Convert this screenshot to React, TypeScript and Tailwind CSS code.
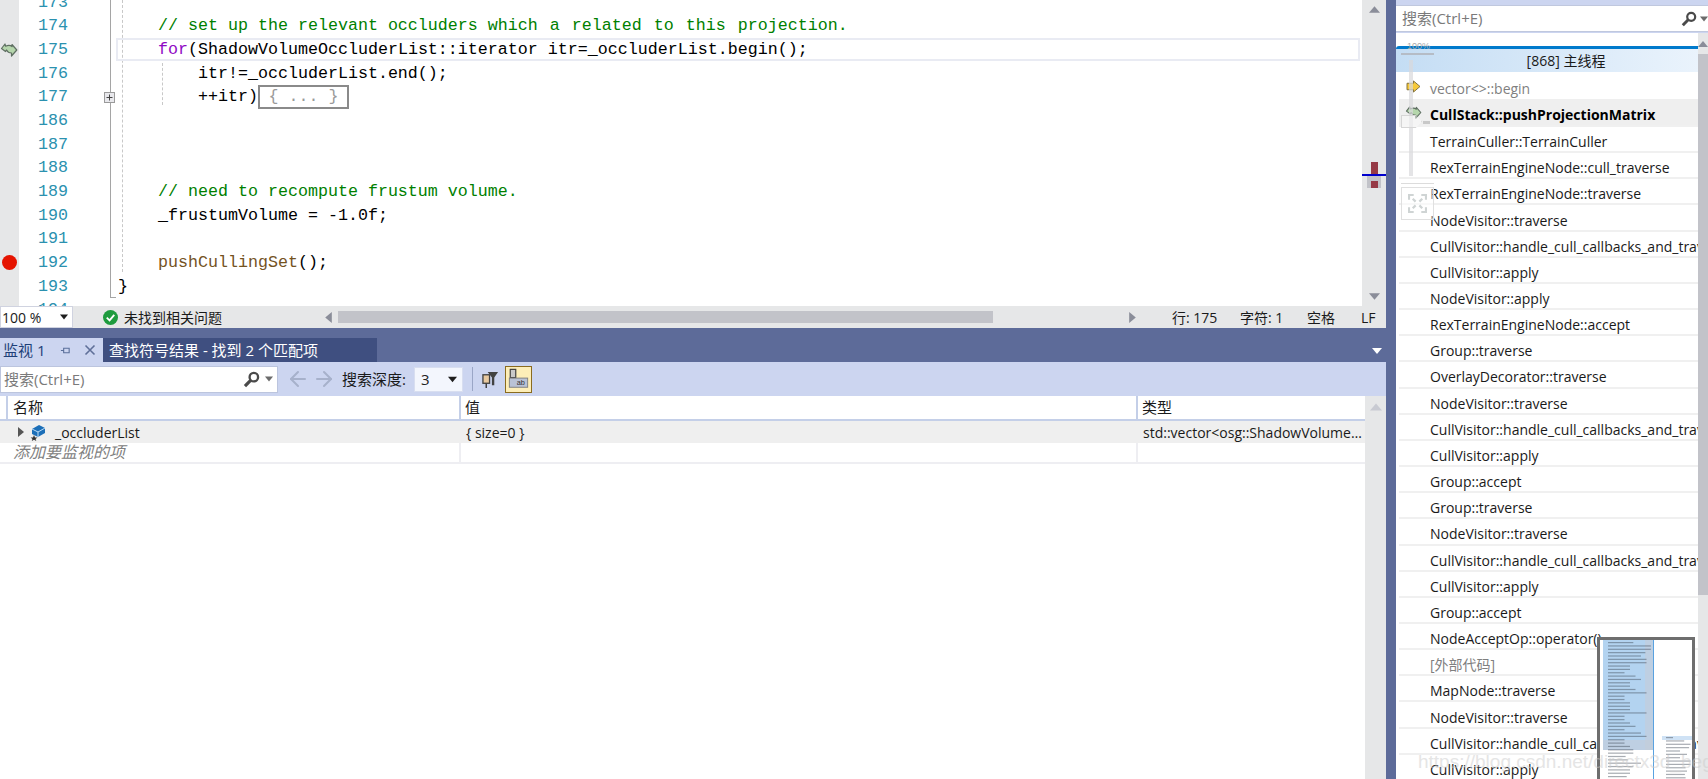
import React from "react";
import { ArrowLeft, ArrowRight } from "lucide-react";

const UI = `font-['Open_Sans','Noto_Sans_CJK_SC',sans-serif]`;

type Seg = [string, string];
const C = "text-[#008000]";
const K = "text-[#8f08c4]";
const lines: { n: number; segs: Seg[]; mark?: "arrow" | "bp"; fold?: boolean; box?: boolean }[] = [
  { n: 173, segs: [] },
  { n: 174, segs: [["    // set up the relevant occluders ", C], ["which a related to this projection.", `${C} [word-spacing:2px]`]] },
  { n: 175, mark: "arrow", segs: [["    ", ""], ["for", K], ["(ShadowVolumeOccluderList::iterator itr=_occluderList.begin();", ""]] },
  { n: 176, segs: [["        itr!=_occluderList.end();", ""]] },
  { n: 177, fold: true, box: true, segs: [["        ++itr)", ""]] },
  { n: 186, segs: [] },
  { n: 187, segs: [] },
  { n: 188, segs: [] },
  { n: 189, segs: [["    // need to recompute frustum volume.", C]] },
  { n: 190, segs: [["    _frustumVolume = -1.0f;", ""]] },
  { n: 191, segs: [] },
  { n: 192, mark: "bp", segs: [["    ", ""], ["pushCullingSet", "text-[#74531f]"], ["();", ""]] },
  { n: 193, segs: [["}", ""]] },
  { n: 194, segs: [] },
];

const H = "CullVisitor::handle_cull_callbacks_and_traverse";
const frames: { t: string; gray?: boolean; bold?: boolean }[] = [
  { t: "vector<>::begin", gray: true },
  { t: "CullStack::pushProjectionMatrix", bold: true },
  { t: "TerrainCuller::TerrainCuller" },
  { t: "RexTerrainEngineNode::cull_traverse" },
  { t: "RexTerrainEngineNode::traverse" },
  { t: "NodeVisitor::traverse" },
  { t: H },
  { t: "CullVisitor::apply" },
  { t: "NodeVisitor::apply" },
  { t: "RexTerrainEngineNode::accept" },
  { t: "Group::traverse" },
  { t: "OverlayDecorator::traverse" },
  { t: "NodeVisitor::traverse" },
  { t: H },
  { t: "CullVisitor::apply" },
  { t: "Group::accept" },
  { t: "Group::traverse" },
  { t: "NodeVisitor::traverse" },
  { t: H },
  { t: "CullVisitor::apply" },
  { t: "Group::accept" },
  { t: "NodeAcceptOp::operator()" },
  { t: "[外部代码]", gray: true },
  { t: "MapNode::traverse" },
  { t: "NodeVisitor::traverse" },
  { t: H },
  { t: "CullVisitor::apply" },
];

function ReturnArrow({ className }: { className?: string }) {
  return (
    <svg viewBox="0 0 18 16" className={className}>
      <path
        d="M1.5 6.5 L5 2 L5.5 4.2 C8 3 10.5 3.2 12 4.5 L12 2.5 L16.8 8 L11.5 14 L11.5 11 C9 11 7.5 10 6.5 8 L5.5 9.5 Z"
        fill="#b5d6ac"
        stroke="#5f6f62"
        strokeWidth="1.2"
        strokeLinejoin="round"
      />
    </svg>
  );
}

function Lens({ className }: { className?: string }) {
  return (
    <svg viewBox="0 0 16 16" className={className} fill="none" stroke="#4a4a4a">
      <circle cx="10.2" cy="5.8" r="4" strokeWidth="2.2" />
      <path d="M7.2 8.8 L1.8 14.2" strokeWidth="3" />
    </svg>
  );
}

const Tri = ({ d, c, className }: { d: string; c: string; className?: string }) => (
  <svg viewBox="0 0 10 10" className={className}>
    <path d={d} fill={c} />
  </svg>
);
const UP = "M0 8 L5 2 L10 8 Z";
const DOWN = "M0 2 L10 2 L5 8 Z";
const LEFT = "M8 0 L8 10 L2 5 Z";
const RIGHT = "M2 0 L2 10 L8 5 Z";

function EditorRow({ l }: { l: (typeof lines)[number] }) {
  return (
    <div className="flex h-[23.7px] items-center leading-[23.7px]">
      <div className="flex h-full w-[19px] shrink-0 items-center justify-center bg-[#e6e7e8] pr-[1px]">
        {l.mark === "arrow" && <ReturnArrow className="h-[16px] w-[18px]" />}
        {l.mark === "bp" && <div className="h-[15px] w-[15px] rounded-full bg-[#e51400]" />}
      </div>
      <div className="w-[49px] shrink-0 text-right text-[#2b91af]">{l.n}</div>
      <div className="flex w-[50px] shrink-0 items-center pl-[36px]">
        {l.fold && (
          <div className="z-10 flex h-[11px] w-[11px] items-center justify-center border border-[#9a9a9a] bg-[#e8e8ec] text-[11px] leading-none text-[#333]">
            <svg viewBox="0 0 9 9" className="h-[9px] w-[9px]">
              <path d="M1.5 4.5 H7.5 M4.5 1.5 V7.5" stroke="#444" strokeWidth="1" />
            </svg>
          </div>
        )}
      </div>
      <div className="flex items-center whitespace-pre text-black">
        {l.segs.map((s, i) => (
          <span key={i} className={s[1]}>
            {s[0]}
          </span>
        ))}
        {l.box && (
          <span className="flex h-[24px] w-[91px] items-center justify-center border-2 border-[#8a8a8a] text-[#9a9a9a]">
            {"{ ... }"}
          </span>
        )}
      </div>
    </div>
  );
}

function Editor() {
  return (
    <div className="relative flex h-[306px] shrink-0 bg-white">
      <div className="relative min-w-0 flex-1 overflow-hidden font-['Liberation_Mono',monospace] text-[16.67px]">
        <div className="-mt-[9.5px]">
          {lines.map((l) => (
            <EditorRow key={l.n} l={l} />
          ))}
        </div>
        {/* fold margin line */}
        <div className="absolute left-[110px] top-0 h-[298px] w-[1px] bg-[#a5a5a5]" />
        <div className="absolute left-[110px] top-[297px] h-[1px] w-[6px] bg-[#a5a5a5]" />
        {/* indent guides */}
        <div className="absolute left-[122px] top-0 h-[272px] border-l border-dashed border-[#c8c8c8]" />
        <div className="absolute left-[162px] top-[63px] h-[42px] border-l border-dashed border-[#c8c8c8]" />
        {/* current line */}
        <div className="absolute left-[116px] right-[2px] top-[38px] h-[23px] border-2 border-[#e9ebf3]" />
      </div>
      <div className="relative flex w-[24px] shrink-0 flex-col items-center justify-between bg-[#e6e7e8] py-[4px]">
        <Tri d={UP} c="#8a8d99" className="h-[11px] w-[11px]" />
        <Tri d={DOWN} c="#8a8d99" className="h-[11px] w-[11px]" />
        <div className="absolute left-[5px] top-[176px] h-[12px] w-[14px] bg-[#c2c3c9]" />
        <div className="absolute left-[9px] top-[162px] h-[12px] w-[7px] bg-[#963a46]" />
        <div className="absolute left-[9px] top-[181px] h-[7px] w-[7px] bg-[#963a46]" />
        <div className="absolute left-0 top-[174px] h-[2px] w-[24px] bg-[#0000cd]" />
      </div>
    </div>
  );
}

function StatusBar() {
  return (
    <div className={`flex h-[22px] shrink-0 items-center bg-[#e6e7e8] text-[14px] text-[#1a1a1a] ${UI}`}>
      <div className="flex h-full w-[73px] shrink-0 items-center justify-between border border-[#d0d3e0] bg-white pl-[1px] pr-[4px]">
        <span>100 %</span>
        <Tri d={DOWN} c="#1e1e1e" className="h-[8px] w-[8px]" />
      </div>
      <svg viewBox="0 0 16 16" className="ml-[30px] h-[15px] w-[15px] shrink-0">
        <circle cx="8" cy="8" r="8" fill="#1e9b3e" />
        <path d="M4 8.2 L7 11 L12 5.2" stroke="#fff" strokeWidth="2" fill="none" />
      </svg>
      <span className="ml-[6px] w-[199px] shrink-0">未找到相关问题</span>
      <Tri d={LEFT} c="#8a8d99" className="h-[11px] w-[11px] shrink-0" />
      <div className="ml-[4px] h-[12px] w-[655px] shrink-0 bg-[#c2c3c9]" />
      <div className="w-[134px] shrink-0" />
      <Tri d={RIGHT} c="#8a8d99" className="h-[11px] w-[11px] shrink-0" />
      <span className="ml-[34px] w-[68px] shrink-0">行: 175</span>
      <span className="w-[67px] shrink-0">字符: 1</span>
      <span className="w-[54px] shrink-0">空格</span>
      <span>LF</span>
    </div>
  );
}

function VarIcon() {
  return (
    <svg viewBox="0 0 16 18" className="h-[18px] w-[16px] shrink-0">
      <path d="M2 6 L9 2 L15 5 L15 10 L8 14 L2 11 Z" fill="#1c6fb8" />
      <path d="M2 6 L8 9 L15 5 M8 9 V14" stroke="#bcdcf5" strokeWidth="1" fill="none" />
      <path d="M4 12 L5 14.5 L7.5 14.6 L5.6 16 L6.3 18 L4 16.8 L1.8 18 L2.4 16 L0.6 14.6 L3 14.5 Z" fill="#333" />
    </svg>
  );
}

function PinFilter() {
  return (
    <svg viewBox="0 0 18 20" className="h-[19px] w-[17px]">
      <rect x="1" y="5" width="7" height="9" fill="#e8c9a0" stroke="#424242" strokeWidth="1.4" />
      <path d="M4.5 14 V19" stroke="#424242" strokeWidth="1.6" />
      <path d="M6 2 H17 L13 8 V16 H10.5 V8 Z" fill="#424242" />
    </svg>
  );
}

function PinLabel() {
  return (
    <svg viewBox="0 0 22 24" className="h-[22px] w-[21px]">
      <rect x="2" y="1.5" width="6" height="9" fill="#c9c9c9" stroke="#424242" strokeWidth="1.3" />
      <path d="M5 10.5 V18" stroke="#424242" strokeWidth="1.6" />
      <rect x="1" y="11" width="20" height="10" fill="#b9c2d6" stroke="#7d7d7d" strokeWidth="1" />
      <text x="9" y="19" fontSize="8" fill="#333" fontFamily="Liberation Sans">ab</text>
    </svg>
  );
}

function WatchPanel() {
  return (
    <div className={`flex min-h-0 flex-1 flex-col text-[14px] text-[#1a1a1a] ${UI}`}>
      <div className="flex h-[34px] shrink-0 items-end bg-[#5d6b99] pr-[3px] text-[15px]">
        <div className="flex h-[24px] w-[103px] shrink-0 items-center bg-[#ccd5f0] pl-[3px] text-[#1e3f78]">
          <span className="w-[57px]">监视 1</span>
          <svg viewBox="0 0 12 12" className="h-[11px] w-[11px]">
            <path d="M1 6 H4 M4 3 V9 M4 3.5 H10 V8.5 H4" stroke="#5a6f9a" fill="none" strokeWidth="1.2" />
          </svg>
          <svg viewBox="0 0 12 12" className="ml-[13px] h-[12px] w-[12px]">
            <path d="M1.5 1.5 L10.5 10.5 M10.5 1.5 L1.5 10.5" stroke="#5f7099" strokeWidth="1.6" />
          </svg>
        </div>
        <div className="flex h-[24px] w-[274px] shrink-0 items-center bg-[#3f4f80] pl-[6px] text-white">
          查找符号结果 - 找到 2 个匹配项
        </div>
        <div className="flex-1" />
        <Tri d={DOWN} c="#ffffff" className="mb-[6px] mr-[1px] h-[10px] w-[10px]" />
      </div>
      <div className="flex h-[34px] shrink-0 items-center bg-[#ccd5f0] text-[15px]">
        <div className="flex h-[27px] w-[278px] shrink-0 items-center border border-[#bcc5de] bg-white pl-[3px] pr-[4px] text-[#7a7a7a]">
          <span className="flex-1">搜索(Ctrl+E)</span>
          <Lens className="h-[17px] w-[17px]" />
          <Tri d={DOWN} c="#6b6b6b" className="ml-[5px] h-[8px] w-[8px]" />
        </div>
        <ArrowLeft className="ml-[8px] h-[24px] w-[24px] text-[#a7b1cb]" strokeWidth={2} />
        <ArrowRight className="ml-[2px] h-[24px] w-[24px] text-[#a7b1cb]" strokeWidth={2} />
        <span className="ml-[6px] w-[72px] shrink-0">搜索深度:</span>
        <div className="flex h-[25px] w-[49px] shrink-0 items-center justify-between border border-[#d8def0] bg-[#f3f6fd] pl-[6px] pr-[5px] text-[#222]">
          <span>3</span>
          <Tri d={DOWN} c="#1e1e1e" className="h-[9px] w-[9px]" />
        </div>
        <div className="ml-[9px] h-[24px] w-[1px] bg-[#9aa6c6]" />
        <div className="ml-[9px] flex w-[17px] justify-center">
          <PinFilter />
        </div>
        <div className="ml-[6px] flex h-[27px] w-[27px] items-center justify-center border border-[#8a6b1f] bg-[#fdeeb8]">
          <PinLabel />
        </div>
      </div>
      <div className="flex min-h-0 flex-1 bg-white">
        <div className="flex min-w-0 flex-1 flex-col">
          <div className="flex h-[25px] shrink-0 border-b-2 border-[#c4cfe8] text-[15px]">
            <div className="w-[8px] shrink-0 border-r-2 border-[#c4cfe8]" />
            <div className="w-[453px] shrink-0 border-r-2 border-[#c4cfe8] pl-[5px] leading-[23px]">名称</div>
            <div className="w-[677px] shrink-0 border-r-2 border-[#c4cfe8] pl-[4px] leading-[23px]">值</div>
            <div className="min-w-0 flex-1 pl-[4px] leading-[23px]">类型</div>
          </div>
          <div className="flex h-[22px] shrink-0 items-center bg-[#efefef]">
            <div className="flex w-[461px] shrink-0 items-center pl-[16px]">
              <Tri d={RIGHT} c="#555" className="h-[10px] w-[10px]" />
              <span className="ml-[4px]">
                <VarIcon />
              </span>
              <span className="ml-[9px]">_occluderList</span>
            </div>
            <div className="w-[677px] shrink-0 pl-[5px]">{"{ size=0 }"}</div>
            <div className="min-w-0 flex-1 truncate pl-[5px]">std::vector&lt;osg::ShadowVolumeOccluder&gt;</div>
          </div>
          <div className="flex h-[21px] shrink-0 border-b-2 border-[#eeeef2] text-[#808080]">
            <div className="w-[461px] shrink-0 overflow-hidden border-r-2 border-[#eeeef2] pl-[13px] text-[16px] italic leading-[19px]">添加要监视的项</div>
            <div className="w-[677px] shrink-0 border-r-2 border-[#eeeef2]" />
          </div>
        </div>
        <div className="flex w-[21px] shrink-0 flex-col items-center bg-[#e6e7e8] pt-[5px]">
          <Tri d={UP} c="#c8cad2" className="h-[12px] w-[12px]" />
        </div>
      </div>
    </div>
  );
}

function Minimap() {
  const left = [
    46, 78, 78, 68, 60, 70, 70, 40, 40, 30, 50, 60, 40, 40, 50, 70, 30, 30, 40, 40, 40, 70, 30, 30, 40, 50, 30, 60, 70, 30, 30, 40, 46, 46, 32, 36, 60, 46, 40, 40, 34,
  ];
  const right = [20, 52, 70, 66, 40, 60, 40, 70, 70, 56, 60, 54, 56];
  return (
    <div className="absolute bottom-0 left-[1597px] h-[142px] w-[98px] overflow-hidden border-[3px] border-b-0 border-[#6e6e6e] bg-white">
      <svg viewBox="0 0 92 139" className="h-full w-full">
        <rect x="3" y="0" width="50" height="110" fill="#b3d3f0" />
        <rect x="45" y="0" width="8" height="110" fill="#c5cdd8" opacity="0.6" />
        <rect x="3" y="100" width="50" height="10" fill="#c5cdd8" opacity="0.6" />
        <rect x="53" y="0" width="1" height="139" fill="#5aa2e0" />
        <rect x="62" y="96" width="30" height="4" fill="#cfe2f5" />
        {left.map((w, i) => (
          <rect key={i} x="8" y={2 + i * 3.35} width={w * 0.55} height="1.2" fill="#3e4654" opacity="0.45" />
        ))}
        {right.map((w, i) => (
          <rect key={i} x="66" y={97 + i * 3.35} width={w * 0.35} height="1.2" fill="#3e4654" opacity="0.45" />
        ))}
      </svg>
    </div>
  );
}

function ZoomSlider() {
  return (
    <div className="absolute left-[1396px] top-[40px] h-[190px] w-[40px] text-[#aaa]">
      <div className="absolute left-[11px] top-[1px] font-['Liberation_Sans',sans-serif] text-[9px] leading-[10px]">100%</div>
      <div className="absolute left-[5px] top-[13px] h-[2px] w-[33px] bg-[#b5bcc6]" />
      <div className="absolute left-[13px] top-[20px] h-[116px] w-[4px] bg-[#d8d8dc] opacity-70" />
      <div className="absolute left-[5px] top-[75px] h-[13px] w-[21px] border border-[#d6d6d6] bg-white/40 [clip-path:polygon(0_0,70%_0,100%_50%,70%_100%,0_100%)]" />
      <div className="absolute left-[27px] top-[81px] h-[3px] w-[7px] bg-[#c8c8c8]" />
      <div className="absolute left-[5px] top-[143px] h-[1px] w-[33px] bg-[#dcdcdc]" />
      <div className="absolute left-[5px] top-[147px] flex h-[33px] w-[33px] items-center justify-center border border-[#e0e0e0] bg-white/50">
        <svg viewBox="0 0 20 20" className="h-[19px] w-[19px]" fill="none" stroke="#cfd4d4" strokeWidth="2.4">
          <path d="M1 6 V1 H6 M14 1 H19 V6 M19 14 V19 H14 M6 19 H1 V14 M5 5 L8 8 M15 5 L12 8 M15 15 L12 12 M5 15 L8 12" />
        </svg>
      </div>
    </div>
  );
}

function StacksPanel() {
  return (
    <div className={`flex h-full w-[312px] shrink-0 flex-col bg-white text-[14px] text-[#1a1a1a] ${UI}`}>
      <div className="flex h-[33px] shrink-0 items-center bg-[#ccd5f0]">
        <div className="mt-[4px] flex h-[27px] w-full items-center border-y border-[#c0c8de] bg-white pl-[6px] text-[15px] text-[#7a7a7a]">
          <span className="flex-1">搜索(Ctrl+E)</span>
          <Lens className="h-[16px] w-[16px]" />
          <Tri d={DOWN} c="#6b6b6b" className="ml-[3px] h-[8px] w-[8px]" />
        </div>
      </div>
      <div className="flex min-h-0 flex-1">
        <div className="min-w-0 flex-1 overflow-hidden pt-[13px]">
          <div className="h-[3px] rounded-tl-[3px] bg-[#007acc]" />
          <div className="flex h-[23px] items-center justify-center bg-gradient-to-r from-[#c4ddf4] to-[#eaf3fc] pl-[38px]">
            [868] 主线程
          </div>
          {frames.map((f, i) => (
            <div
              key={i}
              className={`relative ml-[3px] flex items-center whitespace-nowrap pl-[31px] pt-[5px] ${
                i === 0 ? "h-[27px]" : i === 1 ? "h-[28px] border-b-2 border-[#f0f0f0]" : "h-[26.17px] border-b-2 border-[#f0f0f0]"
              } ${f.bold ? "bg-[#efefef] font-bold text-black" : ""} ${f.gray ? "text-[#7f7f7f]" : ""}`}
            >
              {i === 0 && (
                <svg viewBox="0 0 16 14" className="absolute left-[7px] top-[8px] h-[13px] w-[15px]">
                  <path d="M1 3.5 H8 V1 L15 7 L8 13 V10.5 H1 Z" fill="#f6c93a" stroke="#7d6c3a" strokeWidth="1" />
                </svg>
              )}
              {i === 1 && <ReturnArrow className="absolute left-[6px] top-[6px] h-[15px] w-[17px]" />}
              {f.t}
            </div>
          ))}
        </div>
        <div className="flex w-[10px] shrink-0 flex-col items-center bg-[#e6e7e8] pt-[6px]">
          <Tri d={UP} c="#8a8d99" className="h-[10px] w-[10px]" />
          <div className="mt-[5px] h-[541px] w-full bg-[#c2c3c9]" />
        </div>
      </div>
    </div>
  );
}

export default function App() {
  return (
    <div className="relative flex h-[779px] w-[1708px] overflow-hidden bg-[#5d6b99]">
      <div className="flex h-full w-[1386px] shrink-0 flex-col">
        <Editor />
        <StatusBar />
        <WatchPanel />
      </div>
      <div className="w-[10px] shrink-0 bg-[#5d6b99]" />
      <StacksPanel />
      <ZoomSlider />
      <Minimap />
      <div className="absolute left-[1418px] top-[748px] font-['Liberation_Sans',sans-serif] text-[19px] text-[#cccccc] opacity-50">
        https://blog.csdn.net/directx3d_beginner
      </div>
    </div>
  );
}
